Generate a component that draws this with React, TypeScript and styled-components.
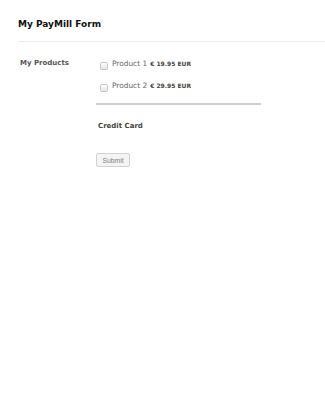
import React from "react";
import styled, { createGlobalStyle } from "styled-components";

const Global = createGlobalStyle`
  html, body { margin: 0; padding: 0; background: #fff; }
  body { font-family: "DejaVu Sans", Verdana, sans-serif; }
`;

const Page = styled.div`
  width: 325px;
  min-height: 400px;
  background: #fff;
`;

const Header = styled.header`
  margin-left: 18px;
  padding: 18px 0 11px 0;
  border-bottom: 1px solid #eeeeee;
`;

const Title = styled.h1`
  margin: 0;
  font-size: 9px;
  line-height: 12px;
  font-weight: bold;
  color: #111;
`;

const FormRow = styled.div`
  display: grid;
  grid-template-columns: 96px 1fr;
  padding-top: 14px;
`;

const Label = styled.div`
  padding: 2px 0 0 20px;
  font-size: 7px;
  line-height: 10px;
  font-weight: bold;
  color: #555;
`;

const Field = styled.div`
  display: flex;
  flex-direction: column;
  padding-top: 1px;
`;

const ProductList = styled.div`
  display: flex;
  flex-direction: column;
  gap: 8px;
`;

const ProductRow = styled.label`
  display: flex;
  align-items: center;
  height: 14px;
  padding-left: 4px;
  gap: 4px;
`;

const Check = styled.input`
  appearance: none;
  -webkit-appearance: none;
  margin: 3px 0 0 0;
  width: 8px;
  height: 8px;
  border: 1px solid #c4c4c4;
  border-radius: 1.5px;
  background: linear-gradient(#fdfdfd, #e6e6e6);
  box-sizing: border-box;
`;

const ProductName = styled.span`
  font-size: 7.4px;
  line-height: 14px;
  color: #666;
`;

const Price = styled.b`
  margin-left: 3px;
  font-size: 6px;
  color: #444;
`;

const Divider = styled.hr`
  margin: 10px 0 0 0;
  width: 165px;
  border: 0;
  border-top: 2px solid #cfcfcf;
  height: 0;
`;

const Section = styled.div`
  margin: 16px 0 0 2px;
  font-size: 7px;
  line-height: 10px;
  font-weight: bold;
  color: #444;
`;

const SubmitButton = styled.button`
  margin-top: 22px;
  align-self: flex-start;
  width: 34px;
  height: 14px;
  padding: 0;
  border: 1px solid #d2d2d2;
  border-radius: 2px;
  background: #f4f4f4;
  color: #7f7f7f;
  font-family: "Liberation Sans", Arial, sans-serif;
  font-size: 6.8px;
`;

const products = [
  { name: "Product 1", price: "€ 19.95 EUR" },
  { name: "Product 2", price: "€ 29.95 EUR" },
];

export default function App() {
  return (
    <Page>
      <Global />
      <Header>
        <Title>My PayMill Form</Title>
      </Header>
      <FormRow>
        <Label>My Products</Label>
        <Field>
          <ProductList>
            {products.map((p) => (
              <ProductRow key={p.name}>
                <Check type="checkbox" />
                <ProductName>
                  {p.name}
                  <Price>{p.price}</Price>
                </ProductName>
              </ProductRow>
            ))}
          </ProductList>
          <Divider />
          <Section>Credit Card</Section>
          <SubmitButton type="button">Submit</SubmitButton>
        </Field>
      </FormRow>
    </Page>
  );
}
